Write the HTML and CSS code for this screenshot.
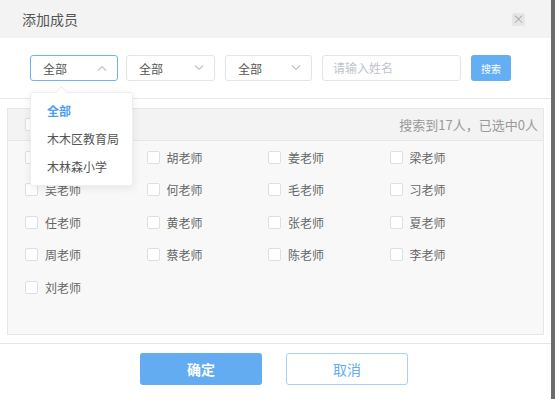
FILE: index.html
```html
<!DOCTYPE html>
<html lang="zh-CN">
  <head>
    <meta charset="UTF-8" />
    <meta name="viewport" content="width=device-width, initial-scale=1.0" />
    <title>添加成员</title>
    <link rel="stylesheet" href="styles.css">
  </head>
  <body>
    <div class="dialog">
      <div class="dialogHeader">
        <span class="title">添加成员</span>
        <span class="closeBtn">&times;</span>
      </div>

      <div class="filters">
        <div class="select first focused">
          <span>全部</span>
          <svg class="arrow" width="10" height="6" viewBox="0 0 10 6"><path d="M1 5.5L5 1.5L9 5.5" fill="none" stroke="#c0c4cc" stroke-width="1.2"/></svg>
        </div>
        <div class="select second">
          <span>全部</span>
          <svg class="arrow" width="10" height="6" viewBox="0 0 10 6"><path d="M1 0.5L5 4.5L9 0.5" fill="none" stroke="#c0c4cc" stroke-width="1.2"/></svg>
        </div>
        <div class="select third">
          <span>全部</span>
          <svg class="arrow" width="10" height="6" viewBox="0 0 10 6"><path d="M1 0.5L5 4.5L9 0.5" fill="none" stroke="#c0c4cc" stroke-width="1.2"/></svg>
        </div>
        <div class="input">请输入姓名</div>
        <button class="searchBtn">搜索</button>

        <div class="dropdown">
          <div class="option active">全部</div>
          <div class="option">木木区教育局</div>
          <div class="option">木林森小学</div>
        </div>
      </div>

      <div class="panel">
        <div class="panelHeader">
          <span class="checkbox"></span>
          <span class="count">搜索到17人，已选中0人</span>
        </div>
        <div class="memberGrid">
          <label class="member"><span class="checkbox"></span>王老师</label>
          <label class="member"><span class="checkbox"></span>胡老师</label>
          <label class="member"><span class="checkbox"></span>姜老师</label>
          <label class="member"><span class="checkbox"></span>梁老师</label>
          <label class="member"><span class="checkbox"></span>吴老师</label>
          <label class="member"><span class="checkbox"></span>何老师</label>
          <label class="member"><span class="checkbox"></span>毛老师</label>
          <label class="member"><span class="checkbox"></span>习老师</label>
          <label class="member"><span class="checkbox"></span>任老师</label>
          <label class="member"><span class="checkbox"></span>黄老师</label>
          <label class="member"><span class="checkbox"></span>张老师</label>
          <label class="member"><span class="checkbox"></span>夏老师</label>
          <label class="member"><span class="checkbox"></span>周老师</label>
          <label class="member"><span class="checkbox"></span>蔡老师</label>
          <label class="member"><span class="checkbox"></span>陈老师</label>
          <label class="member"><span class="checkbox"></span>李老师</label>
          <label class="member"><span class="checkbox"></span>刘老师</label>
        </div>
      </div>

      <div class="dialogFooter">
        <button class="okBtn">确定</button>
        <button class="cancelBtn">取消</button>
      </div>
    </div>
  </body>
</html>
```

FILE: styles.css
```css
body {
  margin: 0;
  background-color: #6b6b6b;
  font-family: "Noto Sans CJK SC", "Noto Sans", sans-serif;
}

.dialog {
  width: 551px;
  height: 399px;
  background-color: #fff;
  display: flex;
  flex-direction: column;
}

.dialogHeader {
  height: 38px;
  background-color: #f3f3f3;
  display: flex;
  align-items: center;
  justify-content: space-between;
  padding: 0 26px 0 22px;
}

.title {
  font-size: 14px;
  color: #555;
}

.closeBtn {
  width: 13px;
  height: 13px;
  background-color: #e6e6e6;
  border-radius: 2px;
  color: #aaa;
  font-size: 12px;
  line-height: 12px;
  text-align: center;
}

.filters {
  position: relative;
  display: flex;
  align-items: center;
  gap: 10px;
  padding: 17px 30px;
  border-bottom: 1px solid #e8e8e8;
}

.select {
  box-sizing: border-box;
  width: 88px;
  height: 26px;
  border: 1px solid #e2e4e8;
  border-radius: 3px;
  display: flex;
  align-items: center;
  justify-content: space-between;
  padding: 0 10px 0 12px;
  font-size: 12px;
  color: #555;
}

.select.first {
  margin-right: -2px;
}

.select.second {
  width: 89px;
}

.select.third {
  width: 87px;
}

.select.focused {
  border-color: #70b3f3;
}

.input {
  box-sizing: border-box;
  width: 139px;
  height: 26px;
  border: 1px solid #e2e4e8;
  border-radius: 3px;
  padding: 0 10px;
  font-size: 12px;
  line-height: 24px;
  color: #c0c4cc;
}

.searchBtn {
  width: 40px;
  height: 26px;
  border: none;
  border-radius: 3px;
  background-color: #64aef3;
  color: #fff;
  font-family: inherit;
  font-size: 10px;
  padding: 0;
}

.dropdown {
  position: absolute;
  top: 54px;
  left: 30px;
  width: 101px;
  padding: 4px 0;
  background-color: #fff;
  border: 1px solid #eceef1;
  border-radius: 3px;
  box-shadow: 0 2px 8px rgba(0, 0, 0, 0.08);
  z-index: 2;
}

.dropdown::before {
  content: "";
  position: absolute;
  top: -5px;
  left: 26px;
  width: 8px;
  height: 8px;
  background-color: #fff;
  border-left: 1px solid #eceef1;
  border-top: 1px solid #eceef1;
  transform: rotate(45deg);
}

.option {
  height: 28px;
  line-height: 28px;
  padding-left: 16px;
  font-size: 12px;
  color: #555;
}

.option.active {
  color: #4a9ff0;
  font-weight: bold;
}

.panel {
  margin: 9px 7px 0;
  height: 225px;
  border: 1px solid #e6e6e6;
  background-color: #f8f8f9;
}

.panelHeader {
  height: 31px;
  background-color: #f3f3f3;
  border-bottom: 1px solid #e6e6e6;
  display: flex;
  align-items: center;
  justify-content: space-between;
  padding: 0 5px 0 17px;
}

.count {
  font-size: 13px;
  color: #999;
}

.checkbox {
  box-sizing: border-box;
  width: 13px;
  height: 13px;
  border: 1px solid #dcdfe6;
  border-radius: 2px;
  background-color: #fff;
  flex-shrink: 0;
}

.memberGrid {
  display: grid;
  grid-template-columns: repeat(4, 121.5px);
  grid-auto-rows: 32.5px;
  padding-left: 17px;
}

.member {
  display: flex;
  align-items: center;
  gap: 7px;
  font-size: 12px;
  color: #666;
}

.dialogFooter {
  margin-top: 8px;
  border-top: 1px solid #e6e6e6;
  display: flex;
  justify-content: center;
  gap: 24px;
  padding: 9px 3px 0 0;
}

.okBtn,
.cancelBtn {
  box-sizing: border-box;
  width: 122px;
  height: 32px;
  border-radius: 3px;
  font-family: inherit;
  font-size: 14px;
  padding: 0;
}

.okBtn {
  border: none;
  background-color: #63acf2;
  color: #fff;
  font-weight: bold;
}

.cancelBtn {
  border: 1px solid #a6d0f7;
  background-color: #fff;
  color: #63acf2;
}
```
